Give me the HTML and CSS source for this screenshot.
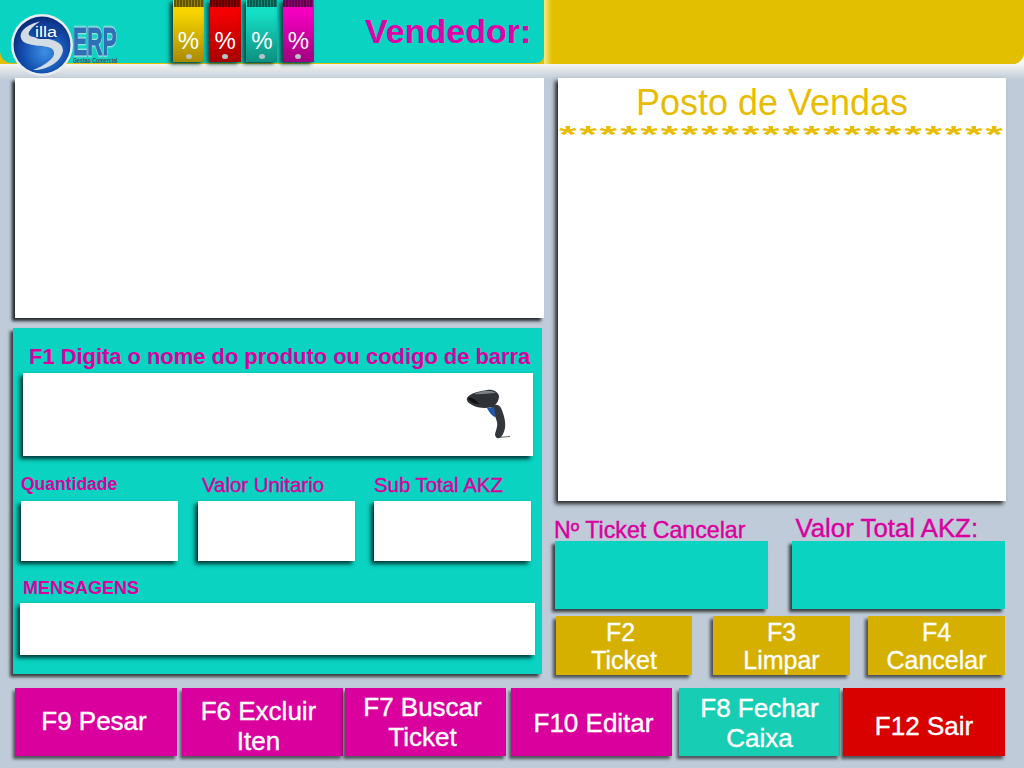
FILE: index.html
```html
<!DOCTYPE html>
<html lang="pt">
<head>
<meta charset="UTF-8">
<meta name="viewport" content="width=device-width, initial-scale=1.0">
<title>Silla ERP - Posto de Vendas</title>
<link rel="stylesheet" href="styles.css">
</head>
<body>
<header class="topbar">
  <div class="topbar-left">
    <svg class="logo" viewBox="0 0 130 80" width="130" height="80">
      <defs>
        <radialGradient id="ball" cx="0.55" cy="0.62" r="0.6">
          <stop offset="0" stop-color="#3d90e6"/>
          <stop offset="0.6" stop-color="#1552b2"/>
          <stop offset="1" stop-color="#0a2c7c"/>
        </radialGradient>
      </defs>
      <circle cx="42" cy="45" r="31" fill="#e6ecf0"/>
      <circle cx="42" cy="45" r="28.500" fill="url(#ball)"/>
      <path transform="translate(1 2)" d="M39 19.500C27 22 18 29 20 36C22 44 37 43 47 45C55 47 55 54 48 59C42 64 37 66 32 68C44 68.500 60 61 62 48.500C62 40 51 37 41 36C32 35.500 26 34.500 28 30C30 26 34 23 39 19.500Z" fill="#d3dbe5"/>
      <rect x="33" y="24" width="27" height="15" rx="7" fill="#0f3f96"/>
      <text class="logo-illa" transform="translate(35 37) scale(1.200 1)">illa</text>
      <text class="logo-erp" transform="translate(73 55) scale(0.560 1)">ERP</text>
      <text class="logo-sub" transform="translate(73 63) scale(0.750 1)">Gestao Comercial</text>
    </svg>
    <div class="tags">
      <div class="tag tag-yellow"><div class="barcode"></div><span>%</span><div class="hole"></div></div>
      <div class="tag tag-red"><div class="barcode"></div><span>%</span><div class="hole"></div></div>
      <div class="tag tag-teal"><div class="barcode"></div><span>%</span><div class="hole"></div></div>
      <div class="tag tag-pink"><div class="barcode"></div><span>%</span><div class="hole"></div></div>
    </div>
    <div class="seller">Vendedor:</div>
  </div>
  <div class="topbar-right"></div>
</header>

<main class="main">
  <div class="col-left">
    <div class="panel-list"></div>
    <section class="panel-entry">
      <label class="entry-title">F1 Digita o nome do produto ou codigo de barra</label>
      <div class="entry-input">
        <svg class="scanner" viewBox="0 0 70 70" width="70" height="70">
          <path d="M47 57.500L60 56.500" stroke="#666" stroke-width="1" fill="none"/>
          <path d="M41 26C45 24 49 24 51 28C54 35 56 42 55 48C54 53 52 57 49 58C47 59 45 57 45 54C46 50 48 46 47 42C46 37 43 33 41 26Z" fill="#33363a"/>
          <path d="M17 18C20 13 30 11 37 10C43 9 48 12 49 16C49 21 46 25 42 27C36 29 27 28 22 25C19 23 16 21 17 18Z" fill="#2f3236"/>
          <path d="M24 14C30 11 40 9 46 13C38 13 30 15 24 14Z" fill="#7b8288"/>
          <path d="M18 18C22 17 26 20 29 24C25 24 20 22 18 18Z" fill="#111"/>
          <path d="M37 28L44 27C45 31 46 34 45 37C42 36 39 32 37 28Z" fill="#1f57a8"/>
        </svg>
      </div>
      <div class="field-labels">
        <label class="qty-label">Quantidade</label>
        <label>Valor Unitario</label>
        <label>Sub Total AKZ</label>
      </div>
      <div class="fields">
        <div class="field"></div>
        <div class="field"></div>
        <div class="field"></div>
      </div>
      <label class="msg-label">MENSAGENS</label>
      <div class="msg-box"></div>
    </section>
  </div>

  <div class="col-right">
    <section class="panel-receipt">
      <h1>Posto de Vendas</h1>
      <div class="stars">**********************</div>
    </section>
    <div class="totals-labels">
      <label>Nº Ticket Cancelar</label>
      <label class="total-label">Valor Total AKZ:</label>
    </div>
    <div class="totals">
      <div class="total-box"></div>
      <div class="total-box"></div>
    </div>
    <div class="gold-row">
      <button class="gold-btn">F2&nbsp;<br>Ticket</button>
      <button class="gold-btn">F3<br>Limpar</button>
      <button class="gold-btn">F4<br>Cancelar</button>
    </div>
  </div>
</main>

<nav class="fkeys">
  <button class="fkey fk-pesar">F9 Pesar</button>
  <button class="fkey fk-excluir">F6 Excluir<br>Iten</button>
  <button class="fkey fk-buscar">F7 Buscar<br>Ticket</button>
  <button class="fkey fk-editar">F10 Editar</button>
  <button class="fkey fk-fechar">F8 Fechar<br>Caixa</button>
  <button class="fkey fk-sair">F12 Sair</button>
</nav>
</body>
</html>
```

FILE: styles.css
```css
body {
  font-family: "Liberation Sans", Arial, sans-serif;
  background: linear-gradient(#f5f7f3 64px, #dfe4e6 70px, #bfcbd8 80px);
  margin: 0;
  width: 1024px;
  height: 768px;
  overflow: hidden;
}
button {
  font-family: inherit;
  border: none;
  padding: 0;
  color: #fff;
}
label {
  display: block;
  color: #d9009e;
  font-weight: bold;
}

/* top bar */
.topbar {
  display: flex;
  height: 64px;
  background: #e2bf00;
  border-radius: 0 0 12px 0;
}
.topbar-left {
  display: flex;
  align-items: flex-start;
  width: 544px;
  height: 63px;
  background: #0ad3c1;
  border-radius: 0 0 8px 12px;
}
.topbar-right {
  flex: 1;
  background: linear-gradient(90deg, #f7e98a, #e2bf00 8px);
  border-radius: 0 0 12px 0;
}
.logo {
  flex: none;
  position: relative;
  z-index: 2;
}
.logo-illa {
  font-size: 15px;
  fill: #fff;
}
.logo-erp {
  font-size: 38px;
  font-weight: bold;
  fill: #2f6fb5;
  stroke: #2f6fb5;
  stroke-width: 1.200px;
  filter: drop-shadow(0 0 1px #e8eef2) drop-shadow(0 0 1px #e8eef2);
}
.logo-sub {
  font-size: 7px;
  font-weight: bold;
  fill: #44505c;
}
.tags {
  display: flex;
  gap: 5.670px;
  margin-left: 43px;
}
.tag {
  display: flex;
  flex-direction: column;
  align-items: center;
  width: 31px;
  height: 62px;
  color: #fff;
  font-size: 24px;
  box-shadow: -3px 2px 4px rgba(0, 50, 50, 0.9);
}
.tag span {
  margin-top: 20px;
  line-height: 28px;
}
.barcode {
  width: 30px;
  height: 7px;
  background: repeating-linear-gradient(90deg, rgba(0, 0, 0, 0.6) 0 2px, rgba(0, 0, 0, 0.4) 2px 3px);
}
.hole {
  width: 6px;
  height: 5px;
  margin-top: -1px;
  border-radius: 50%;
  background: #b9c2c8;
}
.tag-yellow { background: linear-gradient(#f7d400 20%, #a88a00); }
.tag-red { background: linear-gradient(#f50000 20%, #a80000); }
.tag-teal { background: linear-gradient(#14e0c6 20%, #0f8f80); }
.tag-pink { background: linear-gradient(#f500c0 20%, #a00080); }
.seller {
  margin-left: 51px;
  line-height: 62px;
  font-size: 34px;
  font-weight: bold;
  color: #e000a8;
}

/* main area */
.main {
  display: flex;
  padding-top: 14px;
}
.col-left {
  width: 544px;
}
.col-right {
  margin-left: 11px;
  width: 451px;
}
.panel-list {
  margin-left: 15px;
  width: 529px;
  height: 240px;
  background: #fff;
  box-shadow: -3px 3px 3px rgba(0, 0, 0, 0.8);
}
.panel-entry {
  margin: 10px 0 0 13px;
  width: 529px;
  height: 346px;
  box-sizing: border-box;
  padding-top: 12px;
  background: #0ad3c1;
  box-shadow: -3px 3px 3px rgba(0, 0, 0, 0.7);
}
.entry-title {
  margin-left: 16px;
  font-size: 22px;
  line-height: 33px;
  letter-spacing: -0.050px;
  white-space: nowrap;
}
.entry-input {
  display: flex;
  justify-content: flex-end;
  box-sizing: border-box;
  margin-left: 10px;
  width: 510px;
  height: 83px;
  padding: 7px 13px 0 0;
  background: #fff;
  box-shadow: -3px 3px 4px rgba(0, 40, 40, 0.9);
}
.scanner {
  filter: blur(0.4px);
}
.field-labels {
  display: flex;
  margin-top: 17px;
  font-size: 20.400px;
  line-height: 24px;
}
.field-labels label {
  font-weight: normal;
  -webkit-text-stroke: 0.4px #d9009e;
}
.field-labels .qty-label {
  width: 181px;
  margin: 1px 0 0 8px;
  font-size: 17.500px;
  font-weight: bold;
  -webkit-text-stroke: 0;
  line-height: 20px;
}
.field-labels label:nth-child(2) {
  width: 172px;
}
.fields {
  display: grid;
  grid-template-columns: repeat(3, 157px);
  column-gap: 19.500px;
  margin: 4px 0 0 8px;
}
.field {
  height: 60px;
  background: #fff;
  box-shadow: -3px 3px 4px rgba(0, 40, 40, 0.9);
}
.msg-label {
  margin: 13px 0 0 10px;
  font-size: 18px;
  line-height: 29px;
}
.msg-box {
  margin-left: 7px;
  width: 515px;
  height: 52px;
  background: #fff;
  box-shadow: -3px 3px 4px rgba(0, 40, 40, 0.9);
}

/* right column */
.panel-receipt {
  margin-left: 3px;
  width: 448px;
  height: 423px;
  overflow: hidden;
  background: #fff;
  box-shadow: -3px 3px 4px rgba(0, 0, 0, 0.8);
}
.panel-receipt h1 {
  margin: 5px 0 0;
  padding-right: 20px;
  font-size: 36px;
  font-weight: normal;
  line-height: 40px;
  color: #e8bc00;
  text-align: center;
}
.stars {
  margin-left: 1px;
  font-size: 30px;
  font-weight: bold;
  line-height: 30px;
  letter-spacing: 1.860px;
  color: #e8bc00;
  white-space: nowrap;
  transform: scale(1.5, 0.8);
  transform-origin: left top;
}
.totals-labels {
  display: flex;
  height: 40px;
}
.totals-labels label {
  margin: 16px 0 0 -1px;
  font-size: 23.200px;
  line-height: 26px;
  font-weight: normal;
  -webkit-text-stroke: 0.4px #d9009e;
}
.totals-labels .total-label {
  margin: 14px 0 0 50px;
  font-size: 25.800px;
}
.totals {
  display: flex;
  gap: 24px;
}
.total-box {
  width: 213px;
  height: 68px;
  background: #0ad3c1;
  box-shadow: -3px 3px 3px rgba(0, 0, 0, 0.7);
}
.gold-row {
  display: flex;
  margin: 7px 0 0 1px;
}
.gold-btn {
  width: 137px;
  height: 59px;
  background: #d6b000;
  font-size: 25px;
  line-height: 28px;
  -webkit-text-stroke: 0.3px #fff;
  box-shadow: -3px 3px 3px rgba(0, 0, 0, 0.6);
}
.gold-btn:first-child {
  width: 136px;
}
.gold-btn:nth-child(2) {
  margin: 0 18px 0 21px;
}

/* function keys */
.fkeys {
  display: flex;
  margin: 13px 0 0 15px;
}
.fkey {
  width: 161px;
  height: 68px;
  font-size: 26px;
  line-height: 30px;
  -webkit-text-stroke: 0.4px #fff;
  background: #d9009e;
  box-shadow: -2px 3px 3px rgba(0, 0, 0, 0.6);
}
.fk-pesar { width: 162px; padding: 0 4px 2px 0; }
.fk-excluir { margin-left: 5px; padding: 8px 8px 0 0; }
.fk-buscar { margin-left: 2px; padding-right: 6px; }
.fk-editar { margin-left: 5px; padding: 2px 0 0 4px; }
.fk-fechar { margin-left: 7px; padding-top: 2px; background: #17cdb3; }
.fk-sair { width: 162px; margin-left: 3px; padding-top: 8px; background: #d90000; }
```
